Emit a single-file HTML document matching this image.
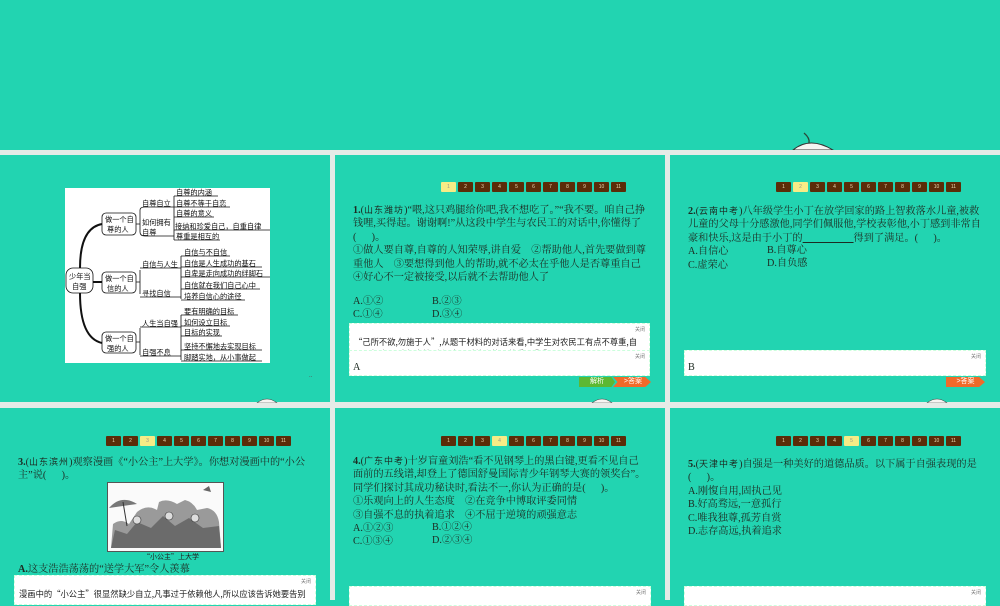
<!DOCTYPE html>
<html><head><meta charset="utf-8"><style>
*{margin:0;padding:0;box-sizing:border-box}
body{width:1000px;height:600px;overflow:hidden;background:#22d4b1;position:relative;font-family:"Liberation Serif","Noto Serif CJK SC",serif;color:#1d1d1d}
.a{position:absolute}
.g{position:absolute;background:#e4ebe7}
.nav{position:absolute;display:flex;gap:2px}
.nav span{display:block;width:15px;height:10px;background:#5b2c08;color:#e8d9b0;font:5px "Liberation Sans",sans-serif;text-align:center;line-height:10px;border-radius:1px}
.nav span.on{background:#f6ec86;color:#998}
.t{position:absolute;font-size:10.2px;line-height:13.4px;white-space:nowrap;color:#1d2b22}
.t b{font-weight:bold}
.t i{font-style:normal;font-family:"Noto Sans CJK SC",sans-serif;font-size:9px;letter-spacing:1px}
.box{position:absolute;background:#fff;border:1px dashed #cfd;}
.cl{position:absolute;right:4px;top:2px;font:5px "Liberation Sans","Noto Sans CJK SC",sans-serif;color:#777}
.ex{position:absolute;left:4px;font-size:8.3px;white-space:nowrap;color:#222;font-family:"Noto Sans CJK SC",sans-serif}
.btn{position:absolute;height:10px;font:7px "Liberation Sans","Noto Sans CJK SC",sans-serif;color:#fff;text-align:center;line-height:10px}
</style></head><body>

<!-- top decoration -->
<svg class="a" style="left:790px;top:130px" width="50" height="22"><path d="M14 3 Q20 8 19 13" stroke="#2a4a3a" stroke-width="1.3" fill="none"/><path d="M3 20 Q20 6 43 20 Z" fill="#f5f5f2" stroke="#333" stroke-width="1"/></svg>

<!-- separators -->
<div class="g" style="left:0;top:150px;width:1000px;height:5px"></div>
<div class="g" style="left:0;top:402px;width:1000px;height:6px"></div>
<div class="g" style="left:330px;top:150px;width:5px;height:450px"></div>
<div class="g" style="left:665px;top:150px;width:5px;height:450px"></div>

<!-- small bottom decos row1 -->
<svg class="a" style="left:255px;top:395px" width="24" height="8"><path d="M2 8 Q12 0 22 8Z" fill="#f5f5f2" stroke="#444" stroke-width=".6"/></svg>
<svg class="a" style="left:590px;top:395px" width="24" height="8"><path d="M2 8 Q12 0 22 8Z" fill="#f5f5f2" stroke="#444" stroke-width=".6"/></svg>
<svg class="a" style="left:925px;top:395px" width="24" height="8"><path d="M2 8 Q12 0 22 8Z" fill="#f5f5f2" stroke="#444" stroke-width=".6"/></svg>

<!-- slide 1: mind map -->
<svg class="a" style="left:0;top:0" width="330" height="400" font-family="Noto Sans CJK SC,sans-serif" font-size="7.2" fill="#111">
<rect x="65" y="188" width="205" height="175" fill="#fff"/>
<g fill="none" stroke="#111">
<path d="M80 268 Q80 228 102 224" stroke-width="2"/>
<path d="M80 293 Q80 338 102 343" stroke-width="2"/>
<path d="M93 282 L102 282" stroke-width="2"/>
<g stroke-width=".8">
<rect x="66" y="268" width="27" height="25" rx="7"/>
<rect x="102" y="213" width="34" height="22" rx="4"/>
<rect x="102" y="272" width="34" height="21" rx="4"/>
<rect x="102" y="332" width="34" height="21" rx="4"/>
<path d="M136 224 H140 M140 210 V232 M140 210 Q140 207 145 207 H174 M140 232 Q140 236 145 236 H174"/>
<path d="M174 196 V240 M174 196 H218 M174 207 H230 M174 217 H214 M174 230 H270 M174 240 H220"/>
<path d="M136 282 H140 M140 270 V294 M140 268 H181 M140 297 H181"/>
<path d="M181 256 V299 M181 256 H230 M181 267 H262 M181 277 H270 M181 289 H260 M181 300 H245"/>
<path d="M136 342 H140 M140 328 V355 M140 327 H181 M140 356 H181"/>
<path d="M181 315 V360 M181 315 H238 M181 326 H230 M181 336 H222 M181 350 H262 M181 361 H262"/>
</g></g>
<text x="69" y="279">少年当</text><text x="72" y="289">自强</text>
<text x="105" y="222">做一个自</text><text x="107" y="232">尊的人</text>
<text x="105" y="281">做一个自</text><text x="107" y="291">信的人</text>
<text x="105" y="341">做一个自</text><text x="107" y="351">强的人</text>
<text x="142" y="206">自尊自立</text>
<text x="142" y="225">如何拥有</text><text x="142" y="235">自尊</text>
<text x="176" y="195">自尊的内涵</text>
<text x="176" y="206">自尊不等于自恋</text>
<text x="176" y="216">自尊的意义</text>
<text x="175" y="229">接纳和珍爱自己，自重自律</text>
<text x="176" y="239">尊重是相互的</text>
<text x="142" y="267">自信与人生</text>
<text x="142" y="296">寻找自信</text>
<text x="184" y="255">自信与不自信</text>
<text x="184" y="266">自信是人生成功的基石</text>
<text x="184" y="276">自卑是走向成功的绊脚石</text>
<text x="184" y="288">自信就在我们自己心中</text>
<text x="184" y="299">培养自信心的途径</text>
<text x="142" y="326">人生当自强</text>
<text x="142" y="355">自强不息</text>
<text x="184" y="314">要有明确的目标</text>
<text x="184" y="325">如何设立目标</text>
<text x="184" y="335">目标的实现</text>
<text x="184" y="349">坚持不懈地去实现目标</text>
<text x="184" y="360">脚踏实地，从小事做起</text>
<text x="309" y="377" font-size="6" fill="#555">..</text>
</svg>

<!-- slide 2 -->
<div class="nav" style="left:441px;top:182px"><span class="on">1</span><span>2</span><span>3</span><span>4</span><span>5</span><span>6</span><span>7</span><span>8</span><span>9</span><span>10</span><span>11</span></div>
<div class="t" style="left:353px;top:203px"><b>1.</b>(<i>山东潍坊</i>)“喂,这只鸡腿给你吧,我不想吃了。”“我不要。咱自己挣<br>钱哩,买得起。谢谢啊!”从这段中学生与农民工的对话中,你懂得了<br>(&nbsp;&nbsp;&nbsp;&nbsp;&nbsp;&nbsp;)。<br>①做人要自尊,自尊的人知荣辱,讲自爱　②帮助他人,首先要做到尊<br>重他人　③要想得到他人的帮助,就不必太在乎他人是否尊重自己<br>④好心不一定被接受,以后就不去帮助他人了</div>
<div class="t" style="left:353px;top:295px">A.①②<br>C.①④</div>
<div class="t" style="left:432px;top:295px">B.②③<br>D.③④</div>
<div class="box" style="left:349px;top:323px;width:301px;height:28px;overflow:hidden"><div class="cl">关闭</div><div class="ex" style="top:12px">“己所不欲,勿施于人”,从题干材料的对话来看,中学生对农民工有点不尊重,自</div><div class="ex" style="top:24px">己不想吃了,才想去给别人,这是对他人的不尊重。①②正确</div></div>
<div class="box" style="left:349px;top:350px;width:301px;height:26px"><div class="cl">关闭</div><div class="t" style="left:3px;top:10px">A</div></div>
<div class="btn" style="left:579px;top:377px;width:36px;background:#5cb833;clip-path:polygon(0 0,90% 0,100% 50%,90% 100%,0 100%)">解析</div>
<div class="btn" style="left:613px;top:377px;width:38px;background:#f06a2a;clip-path:polygon(0 0,85% 0,100% 50%,85% 100%,0 100%,12% 50%)">&nbsp;&gt;答案</div>

<!-- slide 3 -->
<div class="nav" style="left:776px;top:182px"><span>1</span><span class="on">2</span><span>3</span><span>4</span><span>5</span><span>6</span><span>7</span><span>8</span><span>9</span><span>10</span><span>11</span></div>
<div class="t" style="left:688px;top:204px"><b>2.</b>(<i>云南中考</i>)八年级学生小丁在放学回家的路上智救落水儿童,被救<br>儿童的父母十分感激他,同学们佩服他,学校表彰他,小丁感到非常自<br>豪和快乐,这是由于小丁的<u>&nbsp;&nbsp;&nbsp;&nbsp;&nbsp;&nbsp;&nbsp;&nbsp;&nbsp;&nbsp;&nbsp;&nbsp;&nbsp;&nbsp;&nbsp;&nbsp;&nbsp;&nbsp;&nbsp;&nbsp;</u>得到了满足。(&nbsp;&nbsp;&nbsp;&nbsp;&nbsp;&nbsp;)。<br>A.自信心<br>C.虚荣心</div>
<div class="t" style="left:767px;top:244px">B.自尊心<br>D.自负感</div>
<div class="box" style="left:684px;top:350px;width:302px;height:26px"><div class="cl">关闭</div><div class="t" style="left:3px;top:10px">B</div></div>
<div class="btn" style="left:946px;top:377px;width:39px;background:#f06a2a;clip-path:polygon(0 0,85% 0,100% 50%,85% 100%,0 100%)">&gt;答案</div>

<!-- slide 4 -->
<div class="nav" style="left:106px;top:436px"><span>1</span><span>2</span><span class="on">3</span><span>4</span><span>5</span><span>6</span><span>7</span><span>8</span><span>9</span><span>10</span><span>11</span></div>
<div class="t" style="left:18px;top:455px"><b>3.</b>(<i>山东滨州</i>)观察漫画《“小公主”上大学》。你想对漫画中的“小公<br>主”说(&nbsp;&nbsp;&nbsp;&nbsp;&nbsp;&nbsp;)。</div>
<svg class="a" style="left:107px;top:482px" width="117" height="70">
<rect x=".5" y=".5" width="116" height="69" fill="#fafafa" stroke="#555"/>
<path d="M4 66 L6 42 Q14 36 22 42 L30 30 Q40 22 50 28 L52 20 Q60 16 70 22 L78 18 Q86 20 90 28 L100 26 Q110 28 112 40 L114 66Z" fill="#9a9a9a"/>
<path d="M4 66 L8 48 L20 52 L30 40 L44 46 L56 34 L68 44 L82 36 L96 46 L112 44 L114 66Z" fill="#6b6b6b"/>
<path d="M2 26 Q14 12 30 22 Z" fill="#777"/>
<path d="M16 20 L20 44" stroke="#333"/>
<circle cx="30" cy="38" r="4" fill="#ddd" stroke="#333" stroke-width=".6"/>
<circle cx="62" cy="34" r="4" fill="#ddd" stroke="#333" stroke-width=".6"/>
<circle cx="88" cy="36" r="4" fill="#ddd" stroke="#333" stroke-width=".6"/>
<path d="M96 8 L102 4 L104 10Z" fill="#666"/>
</svg>
<div class="a" style="left:143px;top:552px;font:7px 'Noto Sans CJK SC',sans-serif;color:#222">“小公主”上大学</div>
<div class="t" style="left:18px;top:563px"><b>A.</b>这支浩浩荡荡的“送学大军”令人羡慕</div>
<div class="box" style="left:14px;top:575px;width:302px;height:30px"><div class="cl">关闭</div><div class="ex" style="top:12px">漫画中的“小公主”很显然缺少自立,凡事过于依赖他人,所以应该告诉她要告别</div></div>

<!-- slide 5 -->
<div class="nav" style="left:441px;top:436px"><span>1</span><span>2</span><span>3</span><span class="on">4</span><span>5</span><span>6</span><span>7</span><span>8</span><span>9</span><span>10</span><span>11</span></div>
<div class="t" style="left:353px;top:454px"><b>4.</b>(<i>广东中考</i>)十岁盲童刘浩“看不见钢琴上的黑白键,更看不见自己<br>面前的五线谱,却登上了德国舒曼国际青少年钢琴大赛的领奖台”。<br>同学们探讨其成功秘诀时,看法不一,你认为正确的是(&nbsp;&nbsp;&nbsp;&nbsp;&nbsp;&nbsp;)。<br>①乐观向上的人生态度　②在竞争中博取评委同情<br>③自强不息的执着追求　④不屈于逆境的顽强意志<br>A.①②③<br>C.①③④</div>
<div class="t" style="left:432px;top:521px">B.①②④<br>D.②③④</div>
<div class="box" style="left:349px;top:586px;width:302px;height:20px"><div class="cl">关闭</div></div>

<!-- slide 6 -->
<div class="nav" style="left:776px;top:436px"><span>1</span><span>2</span><span>3</span><span>4</span><span class="on">5</span><span>6</span><span>7</span><span>8</span><span>9</span><span>10</span><span>11</span></div>
<div class="t" style="left:688px;top:457px"><b>5.</b>(<i>天津中考</i>)自强是一种美好的道德品质。以下属于自强表现的是<br>(&nbsp;&nbsp;&nbsp;&nbsp;&nbsp;&nbsp;)。<br>A.刚愎自用,固执己见<br>B.好高骛远,一意孤行<br>C.唯我独尊,孤芳自赏<br>D.志存高远,执着追求</div>
<div class="box" style="left:684px;top:586px;width:302px;height:20px"><div class="cl">关闭</div></div>

</body></html>
